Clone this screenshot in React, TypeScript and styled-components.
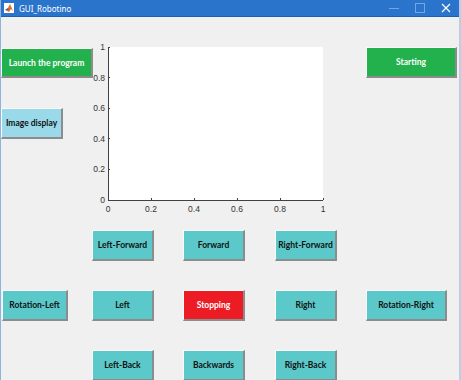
import React from 'react';
import styled, { createGlobalStyle } from 'styled-components';

const GlobalStyle = createGlobalStyle`
    html, body {
        margin: 0;
        padding: 0;
        background: #f0f0f0;
    }
`;

const Window = styled.div`
    width: 461px;
    height: 380px;
    overflow: hidden;
    background-color: #f0f0f0;
    border-left: 1px solid #8fb4dc;
    border-right: 2px solid #b9cfe8;
    box-sizing: border-box;
    display: flex;
    flex-direction: column;
`;

const TitleBar = styled.div`
    height: 16px;
    background-color: #2a75cb;
    border-bottom: 1px solid #1f5fae;
    display: flex;
    align-items: center;
    padding-left: 3px;
    color: #fff;
    font-family: "Noto Sans", sans-serif;
    font-size: 8px;
`;

const Title = styled.span`
    margin-left: 5px;
    flex: 1;
`;

const WinControl = styled.div<{ $faded?: boolean }>`
    width: 26px;
    height: 16px;
    display: flex;
    align-items: center;
    justify-content: center;
    opacity: ${(p) => (p.$faded ? 0.35 : 1)};
`;

const Content = styled.div`
    flex: 1;
    display: flex;
    flex-direction: column;
`;

const TopSection = styled.div`
    height: 213px;
    display: grid;
    grid-template-columns: 91px 274px 1fr;
`;

const LeftColumn = styled.div`
    display: flex;
    flex-direction: column;
    align-items: flex-start;
    padding-top: 31px;
    gap: 30px;
`;

const PlotColumn = styled.div`
    padding-top: 23px;
`;

const RightColumn = styled.div`
    padding-top: 30px;
`;

const Button = styled.button<{ $bg: string; $w: number; $h?: number; $light?: boolean; $ml?: number }>`
    width: ${(p) => p.$w}px;
    height: ${(p) => p.$h ?? 31}px;
    margin-left: ${(p) => p.$ml ?? 0}px;
    padding: 0;
    background-color: ${(p) => p.$bg};
    color: ${(p) => (p.$light ? '#ffffff' : '#111111')};
    font-family: Lato, "Open Sans", sans-serif;
    font-weight: 700;
    font-size: 8.5px;
    border-top: 1px solid #fbfbfb;
    border-left: 1px solid #fbfbfb;
    border-right: 2px solid #8c8c8c;
    border-bottom: 2px solid #8c8c8c;
    box-sizing: border-box;
    display: flex;
    align-items: center;
    justify-content: center;
    white-space: nowrap;
`;

const ControlGrid = styled.div`
    display: grid;
    grid-template-columns: 91px 91px 92px 91px 1fr;
    grid-template-rows: 32px 32px 32px;
    row-gap: 28px;
    align-items: start;
`;

const Empty = styled.div``;

const TEAL = '#5bc9c9';

const Plot = () => {
    const x0 = 16;
    const x1 = 231;
    const y0 = 7;
    const y1 = 160;
    const ticks = [0, 0.2, 0.4, 0.6, 0.8, 1];
    const fmt = (t: number) => (t === 0 || t === 1 ? String(t) : t.toFixed(1));
    return (
        <svg width="240" height="180" viewBox="0 0 240 180">
            <rect x={x0} y={y0} width={x1 - x0} height={y1 - y0} fill="#ffffff" />
            <g stroke="#404040" strokeWidth="1" shapeRendering="crispEdges">
                <line x1={x0} y1={y0} x2={x0} y2={y1} />
                <line x1={x0} y1={y1} x2={x1} y2={y1} />
                {ticks.map((t) => {
                    const x = x0 + t * (x1 - x0);
                    const y = y1 - t * (y1 - y0);
                    return (
                        <g key={t}>
                            <line x1={x} y1={y1} x2={x} y2={y1 - 2} />
                            <line x1={x0} y1={y} x2={x0 + 2} y2={y} />
                        </g>
                    );
                })}
            </g>
            <g fill="#333333" fontFamily="'Liberation Sans', Arial, sans-serif" fontSize="8.5">
                {ticks.map((t) => (
                    <text key={'y' + t} x={x0 - 3} y={y1 - t * (y1 - y0) + 3} textAnchor="end">
                        {fmt(t)}
                    </text>
                ))}
                {ticks.map((t) => (
                    <text key={'x' + t} x={x0 + t * (x1 - x0)} y={y1 + 12} textAnchor="middle">
                        {fmt(t)}
                    </text>
                ))}
            </g>
        </svg>
    );
};

const MatlabIcon = () => (
    <svg width="10" height="10" viewBox="0 0 10 10">
        <rect width="10" height="10" fill="#ffffff" />
        <path d="M1 7 L4 5 L6 1 L9 8 L7 6 L5 9 Z" fill="#e16b1f" />
        <path d="M1 7 L4 5 L5 7 Z" fill="#2f6fb5" />
    </svg>
);

const App = () => {
    return (
        <>
            <GlobalStyle />
            <Window>
                <TitleBar>
                    <MatlabIcon />
                    <Title>GUI_Robotino</Title>
                    <WinControl $faded>
                        <svg width="10" height="10"><line x1="0" y1="5.5" x2="10" y2="5.5" stroke="#fff" /></svg>
                    </WinControl>
                    <WinControl $faded>
                        <svg width="10" height="10"><rect x="0.5" y="0.5" width="9" height="9" fill="none" stroke="#fff" /></svg>
                    </WinControl>
                    <WinControl>
                        <svg width="10" height="10"><path d="M1 1 L9 9 M9 1 L1 9" stroke="#fff" strokeWidth="1.2" /></svg>
                    </WinControl>
                </TitleBar>
                <Content>
                    <TopSection>
                        <LeftColumn>
                            <Button $bg="#22b14c" $w={92} $h={30} $light>Launch the program</Button>
                            <Button $bg="#99d9ea" $w={62}>Image display</Button>
                        </LeftColumn>
                        <PlotColumn>
                            <Plot />
                        </PlotColumn>
                        <RightColumn>
                            <Button $bg="#22b14c" $w={91} $h={31} $light>Starting</Button>
                        </RightColumn>
                    </TopSection>
                    <ControlGrid>
                        <Empty />
                        <Button $bg={TEAL} $w={62}>Left-Forward</Button>
                        <Button $bg={TEAL} $w={62}>Forward</Button>
                        <Button $bg={TEAL} $w={62}>Right-Forward</Button>
                        <Empty />

                        <Button $bg={TEAL} $w={66} $ml={1}>Rotation-Left</Button>
                        <Button $bg={TEAL} $w={62}>Left</Button>
                        <Button $bg="#ed1c24" $w={62} $light>Stopping</Button>
                        <Button $bg={TEAL} $w={62}>Right</Button>
                        <Button $bg={TEAL} $w={81}>Rotation-Right</Button>

                        <Empty />
                        <Button $bg={TEAL} $w={62}>Left-Back</Button>
                        <Button $bg={TEAL} $w={62}>Backwards</Button>
                        <Button $bg={TEAL} $w={62}>Right-Back</Button>
                        <Empty />
                    </ControlGrid>
                </Content>
            </Window>
        </>
    );
};

export default App;
